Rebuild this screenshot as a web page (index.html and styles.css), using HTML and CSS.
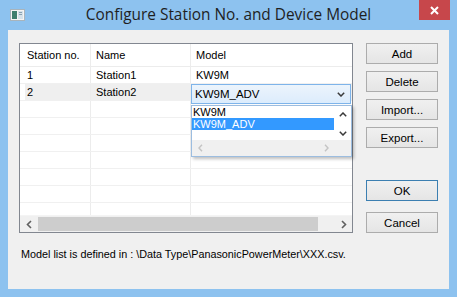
FILE: index.html
```html
<!DOCTYPE html>
<html lang="en">
<head>
    <meta charset="UTF-8">
    <title>Configure Station No. and Device Model</title>
    <link rel="stylesheet" href="styles.css">
</head>
<body>

    <div class="window">

        <!-- Title bar -->
        <div class="titlebar">
            <svg class="app-icon" width="15" height="12" viewBox="0 0 15 12">
                <rect x="0.5" y="0.5" width="14" height="11" fill="#f4f4f4" stroke="#a8b4bc"/>
                <rect x="2" y="2" width="5" height="8" fill="#3f7f6e"/>
                <rect x="8" y="2" width="5" height="8" fill="#d6e2ea"/>
                <rect x="9" y="3" width="3" height="1" fill="#8aa2b2"/>
                <rect x="9" y="5" width="3" height="1" fill="#8aa2b2"/>
            </svg>
            <div class="title">Configure Station No. and Device Model</div>
            <div class="close">
                <svg width="9" height="9" viewBox="0 0 9 9">
                    <path d="M1 1 L8 8 M8 1 L1 8" stroke="#fff" stroke-width="2"/>
                </svg>
            </div>
        </div>

        <!-- Client area -->
        <div class="client">
            <div class="top">

                <!-- Station list -->
                <div class="grid">
                    <div class="row head">
                        <div class="cell">Station no.</div>
                        <div class="cell">Name</div>
                        <div class="cell">Model</div>
                    </div>
                    <div class="body">
                        <div class="row">
                            <div class="cell">1</div>
                            <div class="cell">Station1</div>
                            <div class="cell">KW9M</div>
                        </div>
                        <div class="row current">
                            <div class="cell">2</div>
                            <div class="cell">Station2</div>
                            <div class="cell"></div>
                        </div>
                        <div class="row"><div class="cell"></div><div class="cell"></div><div class="cell"></div></div>
                        <div class="row"><div class="cell"></div><div class="cell"></div><div class="cell"></div></div>
                        <div class="row"><div class="cell"></div><div class="cell"></div><div class="cell"></div></div>
                        <div class="row"><div class="cell"></div><div class="cell"></div><div class="cell"></div></div>
                        <div class="row"><div class="cell"></div><div class="cell"></div><div class="cell"></div></div>
                        <div class="row"><div class="cell"></div><div class="cell"></div><div class="cell"></div></div>
                        <div class="row"><div class="cell"></div><div class="cell"></div><div class="cell"></div></div>
                    </div>
                    <div class="hscroll">
                        <div class="arrow">
                            <svg width="6" height="9" viewBox="0 0 6 9"><path d="M5 1 L1.5 4.5 L5 8" fill="none" stroke="#606060" stroke-width="1.6"/></svg>
                        </div>
                        <div class="thumb"></div>
                        <div class="track"></div>
                        <div class="arrow">
                            <svg width="6" height="9" viewBox="0 0 6 9"><path d="M1 1 L4.5 4.5 L1 8" fill="none" stroke="#606060" stroke-width="1.6"/></svg>
                        </div>
                    </div>

                    <!-- Model combo in edit mode -->
                    <div class="combo">
                        <span>KW9M_ADV</span>
                        <svg width="8" height="5" viewBox="0 0 8 5"><path d="M0.8 0.8 L4 4 L7.2 0.8" fill="none" stroke="#3a3a3a" stroke-width="1.5"/></svg>
                    </div>
                    <div class="droplist">
                        <div class="list-area">
                            <div class="items">
                                <div class="item">KW9M</div>
                                <div class="item selected">KW9M_ADV</div>
                            </div>
                            <div class="vscroll">
                                <svg width="8" height="5" viewBox="0 0 8 5"><path d="M0.8 4.2 L4 1 L7.2 4.2" fill="none" stroke="#3a3a3a" stroke-width="1.5"/></svg>
                                <svg width="8" height="5" viewBox="0 0 8 5"><path d="M0.8 0.8 L4 4 L7.2 0.8" fill="none" stroke="#3a3a3a" stroke-width="1.5"/></svg>
                            </div>
                        </div>
                        <div class="list-hscroll">
                            <svg width="5" height="8" viewBox="0 0 5 8"><path d="M4 0.8 L1 4 L4 7.2" fill="none" stroke="#c4c4c4" stroke-width="1.4"/></svg>
                            <svg width="5" height="8" viewBox="0 0 5 8"><path d="M1 0.8 L4 4 L1 7.2" fill="none" stroke="#c4c4c4" stroke-width="1.4"/></svg>
                        </div>
                    </div>
                </div>

                <!-- Buttons -->
                <div class="buttons">
                    <button>Add</button>
                    <button>Delete</button>
                    <button>Import...</button>
                    <button>Export...</button>
                    <button class="default push">OK</button>
                    <button class="cancel">Cancel</button>
                </div>
            </div>

            <div class="note">Model list is defined in : \Data Type\PanasonicPowerMeter\XXX.csv.</div>
        </div>

    </div>

</body>
</html>
```

FILE: styles.css
```css
/* General */
body {
    margin: 0;
    padding: 0;
    font-family: 'Liberation Sans', Arial, sans-serif;
    font-size: 11px;
    color: #000;
}

.window {
    width: 457px;
    height: 297px;
    background: #8dc2ef;
    display: flex;
    flex-direction: column;
}

/* Title bar */
.titlebar {
    height: 30px;
    display: grid;
    grid-template-columns: 1fr auto 1fr;
    align-items: start;
}

.app-icon {
    margin: 9px 0 0 10px;
}

.title {
    font-family: 'Open Sans', sans-serif;
    font-size: 15.4px;
    color: #1f1f1f;
    line-height: 30px;
}

.close {
    justify-self: end;
    width: 31px;
    height: 20px;
    margin-right: 7px;
    background: #c7474b;
    display: flex;
    align-items: center;
    justify-content: center;
}

/* Client area */
.client {
    flex: 1;
    margin: 0 8px 8px;
    background: #f0f0f0;
    padding: 13px 11px 0;
}

.top {
    display: flex;
    gap: 13px;
}

/* Grid */
.grid {
    position: relative;
    width: 334px;
    height: 190px;
    box-sizing: border-box;
    border: 1px solid #828790;
    background: #fff;
    display: flex;
    flex-direction: column;
}

.row {
    display: grid;
    grid-template-columns: 71px 100px 1fr;
    height: 17px;
    border-bottom: 1px solid #f0f0f0;
    box-sizing: border-box;
}

.row.head {
    height: 23px;
    border-bottom: 1px solid #ececec;
}

.cell {
    padding-left: 7px;
    border-right: 1px solid #ececec;
    line-height: 16px;
    white-space: nowrap;
}

.cell:nth-child(2),
.cell:nth-child(3) {
    padding-left: 5px;
}

.cell:last-child {
    border-right: none;
}

.head .cell {
    line-height: 23px;
}

.row.current .cell {
    background: #efefef;
}

.row.current .cell:first-child {
    background: linear-gradient(to right, #fff 5px, #efefef 5px);
}

.body {
    flex: 1;
    overflow: hidden;
}

/* Horizontal scrollbar */
.hscroll {
    height: 16px;
    display: flex;
    background: #f0f0f0;
    border-top: 1px solid #f4f4f4;
}

.hscroll .arrow {
    width: 17px;
    display: flex;
    align-items: center;
    justify-content: center;
}

.hscroll .thumb {
    width: 280px;
    margin: 1px 0 0 1px;
    height: 14px;
    background: #cdcdcd;
}

.hscroll .track {
    flex: 1;
}

/* Combo editor */
.combo {
    position: absolute;
    left: 171px;
    top: 40px;
    width: 160px;
    height: 20px;
    box-sizing: border-box;
    border: 1px solid #7eb4ea;
    background: linear-gradient(#ecf4fc, #dcecfc);
    display: flex;
    align-items: center;
    justify-content: space-between;
    padding: 0 5px 0 3px;
    font-size: 11.5px;
}

.droplist {
    position: absolute;
    left: 171px;
    top: 61px;
    width: 161px;
    height: 52px;
    box-sizing: border-box;
    border: 1px solid #9cbde0;
    background: #fff;
    box-shadow: 2px 2px 3px rgba(0, 0, 0, 0.25);
    display: flex;
    flex-direction: column;
}

.list-area {
    flex: 1;
    display: flex;
}

.items {
    flex: 1;
    font-size: 11px;
}

.item {
    height: 12px;
    line-height: 12px;
    padding-left: 1px;
    overflow: hidden;
}

.item.selected {
    background: #3399ff;
    color: #fff;
}

.vscroll {
    width: 17px;
    display: flex;
    flex-direction: column;
    align-items: center;
    justify-content: space-between;
    padding: 6px 0 4px;
}

.list-hscroll {
    height: 16px;
    background: #f0f0f0;
    display: flex;
    align-items: center;
    justify-content: space-between;
    padding: 0 22px 0 6px;
}

/* Buttons */
.buttons {
    display: flex;
    flex-direction: column;
    gap: 7px;
    height: 190px;
}

button {
    width: 72px;
    height: 21px;
    padding: 0;
    font-family: 'Liberation Sans', Arial, sans-serif;
    font-size: 11.5px;
    color: #000;
    background: linear-gradient(#f0f0f0, #e5e5e5);
    border: 1px solid #acacac;
    border-radius: 0;
}

button.default {
    border-color: #3c7fb1;
}

button.push {
    margin-top: auto;
}

button.cancel {
    margin-top: 4px;
}

/* Footer note */
.note {
    margin-top: 15px;
    padding-left: 2px;
    font-size: 10.8px;
    line-height: 13px;
    white-space: nowrap;
}
```
